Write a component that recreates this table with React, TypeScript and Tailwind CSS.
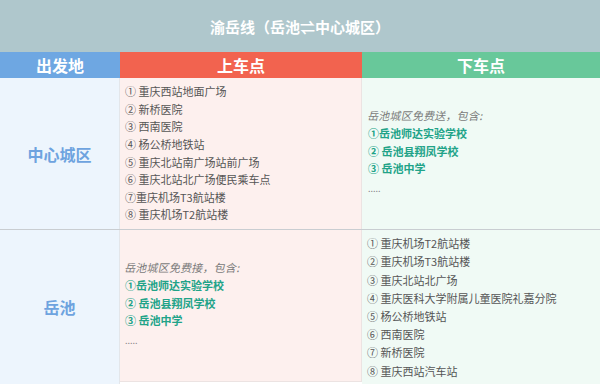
const UP_CENTER = [
  "① 重庆西站地面广场",
  "② 新桥医院",
  "③ 西南医院",
  "④ 杨公桥地铁站",
  "⑤ 重庆北站南广场站前广场",
  "⑥ 重庆北站北广场便民乘车点",
  "⑦重庆机场T3航站楼",
  "⑧ 重庆机场T2航站楼",
];

const DOWN_YUECHI = [
  "① 重庆机场T2航站楼",
  "② 重庆机场T3航站楼",
  "③ 重庆北站北广场",
  "④ 重庆医科大学附属儿童医院礼嘉分院",
  "⑤ 杨公桥地铁站",
  "⑥ 西南医院",
  "⑦ 新桥医院",
  "⑧ 重庆西站汽车站",
];

const SCHOOLS = ["①岳池师达实验学校", "② 岳池县翔凤学校", "③ 岳池中学"];

function Schools({ intro }: { intro: string }) {
  return (
    <div className="flex flex-col leading-[17.8px]">
      {/* skew instead of italic so the CJK face stays the same */}
      <div className="h-[18px]">
        <span className="inline-block -skew-x-12 text-[11px] text-[#7a7a7a] tracking-[0.2px]">
          {intro}
        </span>
      </div>
      {SCHOOLS.map((s) => (
        <div key={s} className="font-bold text-[#21a388]">
          {s}
        </div>
      ))}
      <div className="text-[#888] text-[9px] leading-[22px]">.....</div>
    </div>
  );
}

export default function App() {
  return (
    <div
      className="w-[600px] h-[384px] overflow-hidden bg-white flex flex-col text-[11px] text-[#555]"
      style={{ fontFamily: '"Noto Sans CJK SC", "Noto Sans", sans-serif' }}
    >
      {/* Title */}
      <div className="h-[52px] shrink-0 bg-[#afc7cc] flex items-center justify-center pt-[3px] text-white font-bold text-[15px]">
        渝岳线（岳池⇌中心城区）
      </div>

      {/* Column headers */}
      <div className="h-[26px] shrink-0 flex text-white font-bold text-[16px]">
        <div className="w-[120px] bg-[#6ea7e2] flex items-center justify-center">出发地</div>
        <div className="w-[242px] bg-[#f2634f] flex items-center justify-center">上车点</div>
        <div className="flex-1 bg-[#68c89a] flex items-center justify-center">下车点</div>
      </div>

      {/* Row 1 */}
      <div className="h-[152px] shrink-0 flex border-b border-[#c9cdd1]">
        <div className="w-[120px] bg-[#edf5fd] border-r border-[#e3e6ea] flex items-center justify-center text-[16px] font-bold text-[#6ea3df]">
          中心城区
        </div>
        <div className="w-[242px] bg-[#fdf0ee] border-r border-[#ece3e2] flex flex-col justify-center pl-[5px] leading-[17.6px]">
          {UP_CENTER.map((s) => (
            <div key={s}>{s}</div>
          ))}
        </div>
        <div className="flex-1 bg-[#f0faf5] flex flex-col justify-center pl-[6px]">
          <Schools intro="岳池城区免费送，包含:" />
        </div>
      </div>

      {/* Row 2 */}
      <div className="flex-1 flex">
        <div className="w-[120px] bg-[#edf5fd] border-r border-[#e3e6ea] flex items-center justify-center text-[16px] font-bold text-[#6ea3df]">
          岳池
        </div>
        <div className="w-[242px] bg-[#fdf0ee] border-r border-b border-[#ece3e2] mb-[2px] flex flex-col justify-center pl-[5px]">
          <Schools intro="岳池城区免费接，包含:" />
        </div>
        <div className="flex-1 bg-[#f0faf5] flex flex-col justify-center pl-[5px] leading-[18.2px]">
          {DOWN_YUECHI.map((s) => (
            <div key={s}>{s}</div>
          ))}
        </div>
      </div>
    </div>
  );
}
